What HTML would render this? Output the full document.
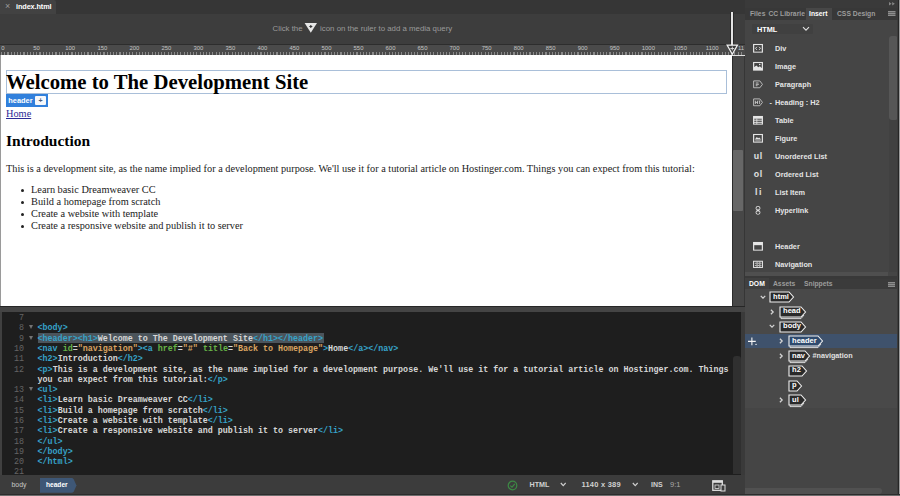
<!DOCTYPE html>
<html><head><meta charset="utf-8">
<style>
*{box-sizing:border-box;margin:0;padding:0}
html,body{width:900px;height:496px;overflow:hidden;background:#3c3c3c;font-family:"Liberation Sans",sans-serif;}
.abs{position:absolute}
#root{position:relative;width:900px;height:496px;overflow:hidden;background:#3c3c3c}
/* top tab bar */
#tabbar{left:0;top:0;width:745px;height:14px;background:#363636}
#tab{left:0;top:0;width:55.5px;height:14px;background:#424242;border-radius:0 2px 0 0}
#tab .x{left:5px;top:1.3px;color:#9a9a9a;font-size:9px;line-height:11px}
#tab .t{left:16px;top:1.4px;color:#fff;font-size:7.3px;font-weight:bold;line-height:11px;letter-spacing:-0.1px}
#toolbar{left:0;top:14px;width:745px;height:30px;background:#3d3d3d}
#hint{left:272.5px;top:23px;color:#9a9a9a;font-size:7.85px;line-height:12px;white-space:nowrap}
.rl{position:absolute;top:1px;color:#c4c4c4;font-size:5.9px;line-height:7px}
#design{left:0;top:55px;width:732px;height:251px;background:#fff;border-left:1px solid #9a9a9a}
#vsb{left:732px;top:56px;width:13px;height:250px;background:#474747;border-left:1px solid #2c2c2c;border-right:1.5px solid #363636}
#vsbthumb{left:733px;top:150px;width:10px;height:60.5px;background:#676767;border-radius:1px}
#divider{left:0;top:306px;width:745px;height:6px;background:#444;border-top:1.5px solid #262626}
#code{left:0;top:312px;width:745px;height:163px;background:#1e1e1e;border-left:2px solid #404040}
#status{left:0;top:475px;width:745px;height:21px;background:#3c3c3c}
#panel{left:745px;top:0;width:155px;height:496px;background:#454545}

/* ruler */
#ruler{left:0;top:44px;width:745px;height:11px;background:#4a4a4a;border-top:1px solid #2d2d2d}
#ticks{left:1.3px;top:52px;width:743px;height:3px;background:repeating-linear-gradient(90deg,#8a8a8a 0,#8a8a8a 1.1px,transparent 1px,transparent 3.2025px)}
/* status */
.sb{position:absolute;color:#d0d0d0;font-size:7.5px;line-height:10px;font-weight:bold;white-space:nowrap}
/* panel */
#ptop{left:745px;top:0;width:155px;height:8px;background:#3a3a3a}
#ptabs{left:745px;top:8px;width:155px;height:12px;background:#383838}
.pt{position:absolute;top:9.3px;font-size:6.75px;line-height:10px;font-weight:bold;color:#9c9c9c;white-space:nowrap}
.ins{transform:translateY(0.6px);position:absolute;left:775px;font-size:7.3px;line-height:10px;font-weight:bold;color:#e4e4e4;white-space:nowrap}
.ico{transform:translateY(0.8px);position:absolute;left:753.3px;width:10px;height:9.1px}
.dtag{position:absolute;height:11px}
.dt{transform:translate(1.1px,0.3px);position:absolute;font-size:7.5px;line-height:10px;font-weight:bold;color:#fff;white-space:nowrap}
/* page */
.serif{font-family:"Liberation Serif",serif;color:#000}
#h1box{left:6px;top:69.5px;width:721px;height:24px;border:1px solid #a9bfd9}
#h1{left:6px;top:70px;font-size:20.72px;font-weight:bold;line-height:24px;white-space:nowrap}
#hdr{left:6px;top:93.5px;width:42px;height:13.5px;background:#3180dc}
#hdr .t{left:2.3px;top:2.1px;color:#fff;font-size:7.4px;font-weight:bold;line-height:10px}
#hdr .p{left:29.2px;top:2px;width:10.6px;height:9.6px;background:#f6f8fb;border-radius:1px;color:#4a5a78;font-size:7px;line-height:9.6px;text-align:center;font-weight:bold}
#home{left:6px;top:108px;font-size:10.32px;line-height:12px;color:#2c2a96;text-decoration:underline;text-decoration-thickness:0.6px}
#h2{left:6px;top:132px;font-size:15.5px;font-weight:bold;line-height:18px}
#p{left:6px;top:163px;font-size:10.29px;line-height:12px;white-space:nowrap;color:#222}
.li{position:absolute;left:31px;font-size:10.32px;line-height:12px;white-space:nowrap;color:#222}
.li:before{content:"";position:absolute;left:-10px;top:5px;width:3px;height:3px;border-radius:2px;background:#222}
/* code */
.mono{font-family:"Liberation Mono",monospace;font-size:8.35px;line-height:10.33px;white-space:pre;color:#d6d6d6;font-weight:bold}
.ln{position:absolute;left:0;width:24px;text-align:right;color:#646464;font-weight:normal}
.cl{position:absolute;left:37.6px}
.tg{color:#36a2c8}.at{color:#66b347}.st{color:#d9a361}
</style></head><body><div id="root">
<div id="tabbar" class="abs"></div>
<div id="tab" class="abs"><span class="abs x">×</span><span class="abs t">index.html</span></div>
<div id="toolbar" class="abs"></div>
<div id="hint" class="abs">Click the<span style="display:inline-block;width:17.5px"></span>icon on the ruler to add a media query</div>
<div id="ruler" class="abs"></div><div id="ticks" class="abs"></div><div class="abs" style="left:0;top:44px;width:744px;height:11px;overflow:hidden"><span class="rl" style="left:1.3px">0</span><span class="rl" style="left:33.3px">50</span><span class="rl" style="left:65.3px">100</span><span class="rl" style="left:97.4px">150</span><span class="rl" style="left:129.4px">200</span><span class="rl" style="left:161.4px">250</span><span class="rl" style="left:193.4px">300</span><span class="rl" style="left:225.5px">350</span><span class="rl" style="left:257.5px">400</span><span class="rl" style="left:289.5px">450</span><span class="rl" style="left:321.6px">500</span><span class="rl" style="left:353.6px">550</span><span class="rl" style="left:385.6px">600</span><span class="rl" style="left:417.6px">650</span><span class="rl" style="left:449.6px">700</span><span class="rl" style="left:481.7px">750</span><span class="rl" style="left:513.7px">800</span><span class="rl" style="left:545.7px">850</span><span class="rl" style="left:577.7px">900</span><span class="rl" style="left:609.8px">950</span><span class="rl" style="left:641.8px">1000</span><span class="rl" style="left:673.8px">1050</span><span class="rl" style="left:705.8px">1100</span><span class="rl" style="left:737.9px">1150</span></div><div class="abs" style="left:730px;top:12px;width:1px;height:33px;background:#2a2a2a"></div><div class="abs" style="left:731px;top:12px;width:2px;height:34px;background:#e4e4e4"></div><div class="abs" style="left:733px;top:12px;width:1px;height:33px;background:#2a2a2a"></div>
<div class="abs" style="left:731px;top:55px;width:14px;height:1px;background:#e0e0e0"></div>
<svg class="abs" style="left:726px;top:43.5px" width="13" height="12" viewBox="0 0 13 12"><path d="M1.2 1.2 L11.4 1.2 L6.3 10.2 Z" fill="#3a3a3a" stroke="#f0f0f0" stroke-width="1.3" stroke-linejoin="miter"/><path d="M6.3 2.6 V6.4 M4.4 4.5 H8.2" stroke="#e0e0e0" stroke-width="0.9" fill="none"/></svg>
<svg class="abs" style="left:304px;top:22px" width="14" height="12" viewBox="0 0 14 12"><path d="M0.6 0.9 L13 0.9 L6.8 10.8 Z" fill="#e6e6e6"/><path d="M6.8 3 V6 M5.3 4.5 H8.3" stroke="#333" stroke-width="1.1" fill="none"/></svg>

<div id="design" class="abs"></div>
<div id="vsb" class="abs"></div><div id="vsbthumb" class="abs"></div>
<div id="h1box" class="abs"></div>
<div id="h1" class="abs serif">Welcome to The Development Site</div>
<div id="hdr" class="abs"><span class="abs t">header</span><span class="abs p">+</span></div>
<div id="home" class="abs serif">Home</div>
<div id="h2" class="abs serif">Introduction</div>
<div id="p" class="abs serif">This is a development site, as the name implied for a development purpose. We'll use it for a tutorial article on Hostinger.com. Things you can expect from this tutorial:</div>
<div class="li serif" style="top:184px">Learn basic Dreamweaver CC</div>
<div class="li serif" style="top:196px">Build a homepage from scratch</div>
<div class="li serif" style="top:208px">Create a website with template</div>
<div class="li serif" style="top:220px">Create a responsive website and publish it to server</div>
<div id="divider" class="abs"></div>
<div id="code" class="abs"></div><span class="mono ln" style="top:313.1px">7</span><span class="mono ln" style="top:323.4px">8</span><span class="abs" style="left:29px;top:325.2px;width:0;height:0;border-left:2.6px solid transparent;border-right:2.6px solid transparent;border-top:4.5px solid #737373"></span><span class="mono cl" style="top:323.4px"><span class="tg">&lt;body&gt;</span></span><div class="abs" style="left:37.6px;top:333px;width:286px;height:10.3px;background:#4b545b"></div><span class="mono ln" style="top:333.7px">9</span><span class="abs" style="left:29px;top:335.5px;width:0;height:0;border-left:2.6px solid transparent;border-right:2.6px solid transparent;border-top:4.5px solid #737373"></span><span class="mono cl" style="top:333.7px"><span class="tg">&lt;header&gt;&lt;h1&gt;</span>Welcome to The Development Site<span class="tg">&lt;/h1&gt;&lt;/header&gt;</span></span><span class="mono ln" style="top:343.9px">10</span><span class="mono cl" style="top:343.9px"><span class="tg">&lt;nav </span><span class="at">id</span>=<span class="st">&quot;navigation&quot;</span><span class="tg">&gt;&lt;a </span><span class="at">href</span>=<span class="st">&quot;#&quot;</span> <span class="at">title</span>=<span class="st">&quot;Back to Homepage&quot;</span><span class="tg">&gt;</span>Home<span class="tg">&lt;/a&gt;&lt;/nav&gt;</span></span><span class="mono ln" style="top:354.2px">11</span><span class="mono cl" style="top:354.2px"><span class="tg">&lt;h2&gt;</span>Introduction<span class="tg">&lt;/h2&gt;</span></span><span class="mono ln" style="top:364.5px">12</span><span class="mono cl" style="top:364.5px"><span class="tg">&lt;p&gt;</span>This is a development site, as the name implied for a development purpose. We&#x27;ll use it for a tutorial article on Hostinger.com. Things</span><span class="mono cl" style="top:374.8px">you can expect from this tutorial:<span class="tg">&lt;/p&gt;</span></span><span class="mono ln" style="top:385.1px">13</span><span class="abs" style="left:29px;top:386.9px;width:0;height:0;border-left:2.6px solid transparent;border-right:2.6px solid transparent;border-top:4.5px solid #737373"></span><span class="mono cl" style="top:385.1px"><span class="tg">&lt;ul&gt;</span></span><span class="mono ln" style="top:395.3px">14</span><span class="mono cl" style="top:395.3px"><span class="tg">&lt;li&gt;</span>Learn basic Dreamweaver CC<span class="tg">&lt;/li&gt;</span></span><span class="mono ln" style="top:405.6px">15</span><span class="mono cl" style="top:405.6px"><span class="tg">&lt;li&gt;</span>Build a homepage from scratch<span class="tg">&lt;/li&gt;</span></span><span class="mono ln" style="top:415.9px">16</span><span class="mono cl" style="top:415.9px"><span class="tg">&lt;li&gt;</span>Create a website with template<span class="tg">&lt;/li&gt;</span></span><span class="mono ln" style="top:426.2px">17</span><span class="mono cl" style="top:426.2px"><span class="tg">&lt;li&gt;</span>Create a responsive website and publish it to server<span class="tg">&lt;/li&gt;</span></span><span class="mono ln" style="top:436.5px">18</span><span class="mono cl" style="top:436.5px"><span class="tg">&lt;/ul&gt;</span></span><span class="mono ln" style="top:446.7px">19</span><span class="mono cl" style="top:446.7px"><span class="tg">&lt;/body&gt;</span></span><span class="mono ln" style="top:457.0px">20</span><span class="mono cl" style="top:457.0px"><span class="tg">&lt;/html&gt;</span></span><span class="mono ln" style="top:467.3px">21</span><div class="abs" style="left:733px;top:356px;width:8px;height:118px;background:#303030;border-radius:3px 3px 0 0"></div><div class="abs" style="left:741px;top:312px;width:4px;height:164px;background:#3a3a3a"></div>
<div id="status" class="abs"></div>
<span class="sb" style="left:11.5px;top:480.3px;font-weight:normal;color:#c8c8c8;font-size:6.9px">body</span>
<svg class="abs" style="left:40px;top:478.3px" width="37" height="15" viewBox="0 0 37 14" preserveAspectRatio="none"><path d="M0 0 H31.5 Q33 0 33.8 1.3 L36.5 6.9 L33.8 12.5 Q33 13.8 31.5 13.8 H0 Z" fill="#3e5776"/></svg>
<span class="sb" style="left:46px;top:480.3px;color:#fff;font-size:6.6px">header</span>
<svg class="abs" style="left:507px;top:480px" width="11" height="11" viewBox="0 0 11 11"><circle cx="5.5" cy="5.5" r="4.3" fill="none" stroke="#3d8a45" stroke-width="1.2"/><path d="M3.3 5.6 L5 7.2 L7.8 3.8" fill="none" stroke="#3d8a45" stroke-width="1.1"/></svg>
<span class="sb" style="left:529.5px;top:480px;font-size:7.2px">HTML</span>
<svg class="abs" style="left:559.5px;top:482.3px" width="6.5" height="5" viewBox="0 0 8 6"><path d="M1 1.2 L4 4.4 L7 1.2" fill="none" stroke="#d0d0d0" stroke-width="1.5"/></svg>
<span class="sb" style="left:581.5px;top:480px;letter-spacing:0.22px">1140 x 389</span>
<svg class="abs" style="left:631.5px;top:482.3px" width="6.5" height="5" viewBox="0 0 8 6"><path d="M1 1.2 L4 4.4 L7 1.2" fill="none" stroke="#d0d0d0" stroke-width="1.5"/></svg>
<span class="sb" style="left:651px;top:480px;font-size:7px">INS</span>
<span class="sb" style="left:670px;top:480px;font-weight:normal;color:#aaa">9:1</span>
<svg class="abs" style="left:712px;top:480px" width="14" height="12" viewBox="0 0 14 12"><rect x="0.8" y="0.8" width="9.5" height="9.5" fill="none" stroke="#e0e0e0" stroke-width="1.3"/><rect x="0.8" y="0.8" width="9.5" height="2" fill="#e0e0e0"/><rect x="9" y="5" width="4" height="6" fill="#3c3c3c" stroke="#e0e0e0" stroke-width="1"/><rect x="3" y="5" width="4" height="3.5" fill="none" stroke="#e0e0e0" stroke-width="0.8"/></svg>

<div id="panel" class="abs"></div><div id="ptop" class="abs"></div><div id="ptabs" class="abs"></div><div class="abs" style="left:806px;top:8px;width:26px;height:12px;background:#474747"></div><span class="pt" style="left:750px">Files</span><span class="pt" style="left:768.5px">CC Librarie</span><span class="pt" style="left:809px;color:#fff">Insert</span><span class="pt" style="left:837px">CSS Design</span><svg class="abs" style="left:888px;top:11.2px" width="7.5" height="5" viewBox="0 0 8 5" preserveAspectRatio="none"><path d="M0 0.65 H8 M0 2.5 H8 M0 4.35 H8" stroke="#8e8e8e" stroke-width="1.3"/></svg><svg class="abs" style="left:889.2px;top:2.3px" width="6" height="3.6" viewBox="0 0 6 3.6"><path d="M0 0 L2.6 1.8 L0 3.6 Z M3.2 0 L5.8 1.8 L3.2 3.6 Z" fill="#888"/></svg><div class="abs" style="left:752px;top:24px;width:61px;height:9.5px;background:#404040;border-radius:1px"></div><span class="ins" style="left:757px;top:23.5px;color:#fff">HTML</span><svg class="abs" style="left:802px;top:26px" width="8" height="6" viewBox="0 0 8 6"><path d="M1 1.2 L4 4.2 L7 1.2" fill="none" stroke="#e0e0e0" stroke-width="1.1"/></svg><div class="abs" style="left:888.5px;top:36px;width:9px;height:236px;background:#414141;border-radius:4px 4px 0 0"></div><div class="abs" style="left:888.5px;top:35.5px;width:9px;height:84.5px;background:#565656;border-radius:3px"></div><svg class="ico" style="top:43px" viewBox="0 0 11 10"><rect x="0.7" y="0.7" width="9.6" height="8.6" fill="none" stroke="#e6e6e6" stroke-width="1.3"/><path d="M4.3 3.3 L2.8 5 L4.3 6.7 M6.7 3.3 L8.2 5 L6.7 6.7" fill="none" stroke="#e6e6e6" stroke-width="1"/></svg><span class="ins" style="top:43px">Div</span><svg class="ico" style="top:61px" viewBox="0 0 11 10"><rect x="0.7" y="0.7" width="9.6" height="8.6" fill="none" stroke="#e6e6e6" stroke-width="1.3"/><path d="M1 9 V6 L3.8 4 L5.8 6 L7.5 5 L10 7 V9 Z" fill="#e6e6e6"/><circle cx="7.4" cy="3" r="0.9" fill="#e6e6e6"/></svg><span class="ins" style="top:61px">Image</span><svg class="ico" style="top:79px" viewBox="0 0 11 10"><path d="M0.7 1.2 H7.5 L10.4 5 L7.5 8.8 H0.7 Z" fill="none" stroke="#c4c4c4" stroke-width="1"/><path d="M3 3.5 H6 M3 5 H6.5 M3 6.5 H5" stroke="#e6e6e6" stroke-width="0.8"/></svg><span class="ins" style="top:79px">Paragraph</span><svg class="ico" style="top:97px" viewBox="0 0 11 10"><path d="M0.7 1.2 H7.5 L10.4 5 L7.5 8.8 H0.7 Z" fill="none" stroke="#c4c4c4" stroke-width="1"/><path d="M2.6 3.2 V6.8 M5 3.2 V6.8 M2.6 5 H5 M6.3 3.4 H7.3 V6.8" stroke="#e6e6e6" stroke-width="0.8" fill="none"/></svg><span class="ins" style="left:769.5px;top:97px">-</span><span class="ins" style="top:97px">Heading : H2</span><svg class="ico" style="top:115px" viewBox="0 0 11 10"><rect x="0.7" y="0.7" width="9.6" height="8.6" fill="none" stroke="#e6e6e6" stroke-width="1.3"/><path d="M0.7 3.4 H10.3 M0.7 5.4 H10.3 M0.7 7.4 H10.3 M4.2 3 V9.3" stroke="#e6e6e6" stroke-width="0.9"/><rect x="0.7" y="0.7" width="9.6" height="2.2" fill="#e6e6e6"/></svg><span class="ins" style="top:115px">Table</span><svg class="ico" style="top:133px" viewBox="0 0 11 10"><rect x="0.7" y="0.7" width="9.6" height="8.6" fill="none" stroke="#e6e6e6" stroke-width="1.3"/><path d="M2 6.3 L4.2 3.6 L5.6 5 L6.8 4.2 L9 6.3 Z" fill="#e6e6e6"/><path d="M2.5 7.8 H8.5" stroke="#e6e6e6" stroke-width="0.8"/></svg><span class="ins" style="top:133px">Figure</span><span class="ins" style="left:753.8px;top:150.2px;font-size:8.8px;letter-spacing:0.7px;font-weight:bold;color:#e0e0e0">ul</span><span class="ins" style="top:151px">Unordered List</span><span class="ins" style="left:753.8px;top:168.2px;font-size:8.8px;letter-spacing:0.7px;font-weight:bold;color:#e0e0e0">ol</span><span class="ins" style="top:169px">Ordered List</span><span class="ins" style="left:755px;top:186.2px;font-size:8.8px;letter-spacing:1.6px;font-weight:bold;color:#e0e0e0">li</span><span class="ins" style="top:187px">List Item</span><svg class="ico" style="top:205px" viewBox="0 0 11 10"><rect x="3.4" y="0.5" width="4.2" height="4.4" rx="2" fill="none" stroke="#e6e6e6" stroke-width="1"/><rect x="3.4" y="5.1" width="4.2" height="4.4" rx="2" fill="none" stroke="#e6e6e6" stroke-width="1"/><path d="M5.5 3.3 V6.7" stroke="#e6e6e6" stroke-width="1"/></svg><span class="ins" style="top:205px">Hyperlink</span><svg class="ico" style="top:241px" viewBox="0 0 11 10"><rect x="0.7" y="0.7" width="9.6" height="8.6" fill="none" stroke="#e6e6e6" stroke-width="1.3"/><rect x="0.7" y="0.7" width="9.6" height="3" fill="#e6e6e6"/></svg><span class="ins" style="top:241px">Header</span><svg class="ico" style="top:259px" viewBox="0 0 11 10"><rect x="0.6" y="1.6" width="9.8" height="6.8" fill="none" stroke="#e6e6e6" stroke-width="1.1"/><path d="M2 3.8 H4 M2 6.2 H4 M5 3.8 H7 M5 6.2 H7 M8 3.8 H9.3 M8 6.2 H9.3 M4.5 2 V8 M7.5 2 V8" stroke="#e6e6e6" stroke-width="0.9"/></svg><span class="ins" style="top:259px">Navigation</span><div class="abs" style="left:745px;top:272px;width:143px;height:4.3px;background:#4f4f4f"></div><div class="abs" style="left:745px;top:276.3px;width:153px;height:2.7px;background:#393939"></div><div class="abs" style="left:745px;top:279px;width:153px;height:10px;background:#3b3b3b"></div><div class="abs" style="left:745px;top:278px;width:24px;height:11px;background:#404040"></div><span class="pt" style="left:749px;top:279.3px;color:#fff">DOM</span><span class="pt" style="left:773px;top:279.3px">Assets</span><span class="pt" style="left:804px;top:279.3px">Snippets</span><svg class="abs" style="left:888.3px;top:281.7px" width="7" height="5" viewBox="0 0 8 5" preserveAspectRatio="none"><path d="M0 0.65 H8 M0 2.5 H8 M0 4.35 H8" stroke="#8e8e8e" stroke-width="1.3"/></svg><div class="abs" style="left:745px;top:289px;width:152px;height:119px;background:#494949"></div><div class="abs" style="left:745px;top:334px;width:152px;height:14px;background:#3f526c"></div><svg class="abs" style="left:760.30px;top:294.75px" width="6" height="4.5" viewBox="0 0 8 6"><path d="M1 1.2 L4 4.2 L7 1.2" fill="none" stroke="#d4d4d4" stroke-width="1.7"/></svg><svg class="abs" style="left:768.7px;top:291px" width="27" height="14" viewBox="0 0 27 14"><path d="M1 1 H20 L24.5 6 L20 11 H1 Z" fill="#2a2a2a" stroke="#f0f0f0" stroke-width="1.1"/></svg><span class="dt" style="left:772px;top:291.5px">html</span><svg class="abs" style="left:770.20px;top:308.50px" width="4.5" height="6" viewBox="0 0 6 8"><path d="M1.2 1 L4.2 4 L1.2 7" fill="none" stroke="#d4d4d4" stroke-width="1.7"/></svg><svg class="abs" style="left:778.7px;top:305.5px" width="29" height="14" viewBox="0 0 29 14"><path d="M2 11.2 V12.6 H22 L25 9" fill="none" stroke="#e8e8e8" stroke-width="0.9"/><path d="M1 1 H22 L26.5 6 L22 11 H1 Z" fill="#2a2a2a" stroke="#f0f0f0" stroke-width="1.1"/></svg><span class="dt" style="left:782px;top:306.0px">head</span><svg class="abs" style="left:769.30px;top:324.25px" width="6" height="4.5" viewBox="0 0 8 6"><path d="M1 1.2 L4 4.2 L7 1.2" fill="none" stroke="#d4d4d4" stroke-width="1.7"/></svg><svg class="abs" style="left:778.7px;top:320.5px" width="29" height="14" viewBox="0 0 29 14"><path d="M1 1 H22 L26.5 6 L22 11 H1 Z" fill="#2a2a2a" stroke="#f0f0f0" stroke-width="1.1"/></svg><span class="dt" style="left:782px;top:321.0px">body</span><svg class="abs" style="left:748px;top:337px" width="9.5" height="9.5" viewBox="0 0 11 11"><path d="M4.5 0.5 V9.5 M0 5 H9" stroke="#f4f4f4" stroke-width="1.3"/><circle cx="9.3" cy="8.6" r="0.8" fill="#f4f4f4"/></svg><svg class="abs" style="left:779.20px;top:338.30px" width="4.5" height="6" viewBox="0 0 6 8"><path d="M1.2 1 L4.2 4 L1.2 7" fill="none" stroke="#d4d4d4" stroke-width="1.7"/></svg><svg class="abs" style="left:787.7px;top:335.3px" width="37" height="14" viewBox="0 0 37 14"><path d="M2 11.2 V12.6 H30 L33 9" fill="none" stroke="#e8e8e8" stroke-width="0.9"/><path d="M1 1 H30 L34.5 6 L30 11 H1 Z" fill="#2e4a6e" stroke="#f0f0f0" stroke-width="1.1"/></svg><span class="dt" style="left:791px;top:335.8px">header</span><svg class="abs" style="left:779.20px;top:353.00px" width="4.5" height="6" viewBox="0 0 6 8"><path d="M1.2 1 L4.2 4 L1.2 7" fill="none" stroke="#d4d4d4" stroke-width="1.7"/></svg><svg class="abs" style="left:787.7px;top:350px" width="24" height="14" viewBox="0 0 24 14"><path d="M2 11.2 V12.6 H17 L20 9" fill="none" stroke="#e8e8e8" stroke-width="0.9"/><path d="M1 1 H17 L21.5 6 L17 11 H1 Z" fill="#2a2a2a" stroke="#f0f0f0" stroke-width="1.1"/></svg><span class="dt" style="left:791px;top:350.5px">nav</span><span class="dt" style="left:811.5px;top:351px;color:#e0e0e0;font-size:7.2px">#navigation</span><svg class="abs" style="left:787.7px;top:364.7px" width="21" height="14" viewBox="0 0 21 14"><path d="M1 1 H14 L18.5 6 L14 11 H1 Z" fill="#2a2a2a" stroke="#f0f0f0" stroke-width="1.1"/></svg><span class="dt" style="left:791px;top:365.2px">h2</span><svg class="abs" style="left:787.7px;top:379.5px" width="16" height="14" viewBox="0 0 16 14"><path d="M1 1 H9 L13.5 6 L9 11 H1 Z" fill="#2a2a2a" stroke="#f0f0f0" stroke-width="1.1"/></svg><span class="dt" style="left:791px;top:380.0px">p</span><svg class="abs" style="left:779.20px;top:397.00px" width="4.5" height="6" viewBox="0 0 6 8"><path d="M1.2 1 L4.2 4 L1.2 7" fill="none" stroke="#d4d4d4" stroke-width="1.7"/></svg><svg class="abs" style="left:787.7px;top:394px" width="20" height="14" viewBox="0 0 20 14"><path d="M2 11.2 V12.6 H13 L16 9" fill="none" stroke="#e8e8e8" stroke-width="0.9"/><path d="M1 1 H13 L17.5 6 L13 11 H1 Z" fill="#2a2a2a" stroke="#f0f0f0" stroke-width="1.1"/></svg><span class="dt" style="left:791px;top:394.5px">ul</span><div class="abs" style="left:745px;top:487.7px;width:137px;height:6px;background:#515151;border-radius:0 3px 3px 0"></div><div class="abs" style="left:897px;top:20px;width:1px;height:476px;background:#3c3c3c"></div><div class="abs" style="left:898px;top:0;width:1px;height:496px;background:#262626"></div><div class="abs" style="left:899px;top:0;width:1px;height:496px;background:#9a9a9a"></div>
<div class="abs" style="left:0;top:494px;width:900px;height:1px;background:#2c2c2c"></div><div class="abs" style="left:0;top:495px;width:900px;height:1px;background:#6c6c6c"></div>
</div></body></html>
